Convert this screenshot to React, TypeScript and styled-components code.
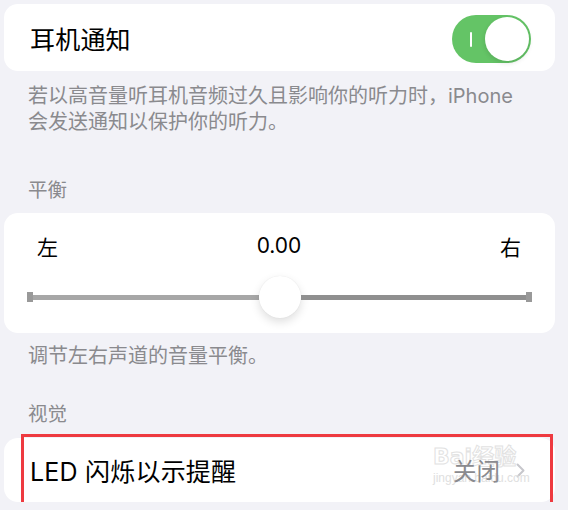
import styled, { createGlobalStyle } from "styled-components";

const GlobalStyle = createGlobalStyle`
    html, body {
        margin: 0;
        padding: 0;
        background-color: #f2f2f7;
        font-family: "Inter", "Noto Sans CJK SC", sans-serif;
        -webkit-font-smoothing: antialiased;
    }
`;

export default function App() {
    return (
        <>
            <GlobalStyle />
            <Page>
                <Card>
                    <Row $height={67}>
                        <Title>耳机通知</Title>
                        <Switch $on>
                            <SwitchMark />
                            <Knob />
                        </Switch>
                    </Row>
                </Card>
                <Footer>
                    若以高音量听耳机音频过久且影响你的听力时，iPhone
                    <br />
                    会发送通知以保护你的听力。
                </Footer>

                <Header $top={43}>平衡</Header>
                <Card>
                    <BalanceBox>
                        <LabelRow>
                            <SideLabel>左</SideLabel>
                            <ValueLabel>0.00</ValueLabel>
                            <SideLabel>右</SideLabel>
                        </LabelRow>
                        <Slider>
                            <Cap />
                            <Track $tone="#a7a7a7" />
                            <Thumb />
                            <Track $tone="#8f8f8f" />
                            <Cap />
                        </Slider>
                    </BalanceBox>
                </Card>
                <Footer $top={10}>调节左右声道的音量平衡。</Footer>

                <Header $top={33} $bottom={12}>视觉</Header>
                <Card>
                    <Row $height={64} $right={30}>
                        <Title>LED 闪烁以示提醒</Title>
                        <Detail>
                            <Watermark>
                                <WatermarkLogo>Bai经验</WatermarkLogo>
                                <WatermarkUrl>jingyan.baidu.com</WatermarkUrl>
                            </Watermark>
                            <Value>关闭</Value>
                            <svg width="9" height="15" viewBox="0 0 9 15">
                                <path d="M1.5 1.5 L7.5 7.5 L1.5 13.5" fill="none" stroke="#c7c7cc" strokeWidth="2" strokeLinecap="round" strokeLinejoin="round" />
                            </svg>
                        </Detail>
                    </Row>
                    <Highlight />
                </Card>
            </Page>
        </>
    );
}

const Page = styled.div`
    display: flex;
    flex-direction: column;
    width: 551px;
    padding: 4px 13px 0 4px;
`;

const Card = styled.div`
    position: relative;
    background-color: #ffffff;
    border-radius: 14px;
`;

const Row = styled.div<{ $height: number; $right?: number }>`
    display: flex;
    align-items: center;
    justify-content: space-between;
    height: ${({ $height }) => $height}px;
    padding: 0 ${({ $right }) => $right ?? 24}px 0 26px;
`;

const Title = styled.span`
    font-size: 25px;
    color: #000000;
    letter-spacing: 0.2px;
`;

const Switch = styled.div<{ $on?: boolean }>`
    position: relative;
    width: 79px;
    height: 48px;
    border-radius: 24px;
    background-color: ${({ $on }) => ($on ? "#64c466" : "#e9e9ea")};
    margin-top: 2px;
`;

const SwitchMark = styled.span`
    position: absolute;
    left: 18px;
    top: 17px;
    width: 2px;
    height: 15px;
    border-radius: 1px;
    background-color: #ffffff;
`;

const Knob = styled.span`
    position: absolute;
    right: 2px;
    top: 2px;
    width: 44px;
    height: 44px;
    border-radius: 50%;
    background-color: #ffffff;
    box-shadow: 0 2px 5px rgba(0, 0, 0, 0.12);
`;

const Footer = styled.div<{ $top?: number }>`
    padding: ${({ $top }) => $top ?? 12}px 16px 0 24px;
    font-size: 20px;
    line-height: 26px;
    color: #8a8a8e;
`;

const Header = styled.div<{ $top: number; $bottom?: number }>`
    margin: ${({ $top }) => $top}px 0 ${({ $bottom }) => $bottom ?? 11}px;
    padding-left: 24px;
    font-size: 19.5px;
    line-height: 24px;
    color: #8a8a8e;
`;

const BalanceBox = styled.div`
    display: flex;
    flex-direction: column;
    gap: 16px;
    padding: 19px 23px 15px;
`;

const LabelRow = styled.div`
    display: flex;
    align-items: center;
    justify-content: space-between;
    height: 28px;
    padding: 0 11px 0 10px;
`;

const SideLabel = styled.span`
    font-size: 21px;
    color: #000000;
`;

const ValueLabel = styled.span`
    font-size: 21px;
    color: #000000;
    margin-top: -2px;
`;

const Slider = styled.div`
    display: flex;
    align-items: center;
    height: 42px;
`;

const Cap = styled.span`
    width: 6px;
    height: 10px;
    background-color: #999999;
    flex-shrink: 0;
`;

const Track = styled.span<{ $tone: string }>`
    flex: 1;
    height: 5px;
    background-color: ${({ $tone }) => $tone};
`;

const Thumb = styled.span`
    width: 42px;
    height: 42px;
    border-radius: 50%;
    background-color: #ffffff;
    box-shadow: 0 4px 10px rgba(0, 0, 0, 0.13), 0 0 1px rgba(0, 0, 0, 0.1);
    flex-shrink: 0;
`;

const Detail = styled.div`
    position: relative;
    display: flex;
    align-items: center;
    gap: 16px;
`;

const Value = styled.span`
    position: relative;
    font-size: 23.5px;
    color: #8a8a8e;
`;

const Watermark = styled.div`
    position: absolute;
    left: -20px;
    top: -8px;
    display: flex;
    flex-direction: column;
    align-items: flex-start;
    pointer-events: none;
`;

const WatermarkLogo = styled.span`
    font-family: "DejaVu Sans", "Noto Sans CJK SC", sans-serif;
    font-size: 22px;
    font-weight: 700;
    line-height: 24px;
    color: transparent;
    -webkit-text-stroke: 1px #e2e2e2;
`;

const WatermarkUrl = styled.span`
    font-family: "Liberation Sans", sans-serif;
    font-size: 12px;
    line-height: 14px;
    color: #e0e0e0;
    margin-top: 2px;
`;

const Highlight = styled.div`
    position: absolute;
    left: 17px;
    right: 2px;
    top: -4px;
    bottom: -4px;
    border: 3px solid #ee3a40;
    pointer-events: none;
`;
